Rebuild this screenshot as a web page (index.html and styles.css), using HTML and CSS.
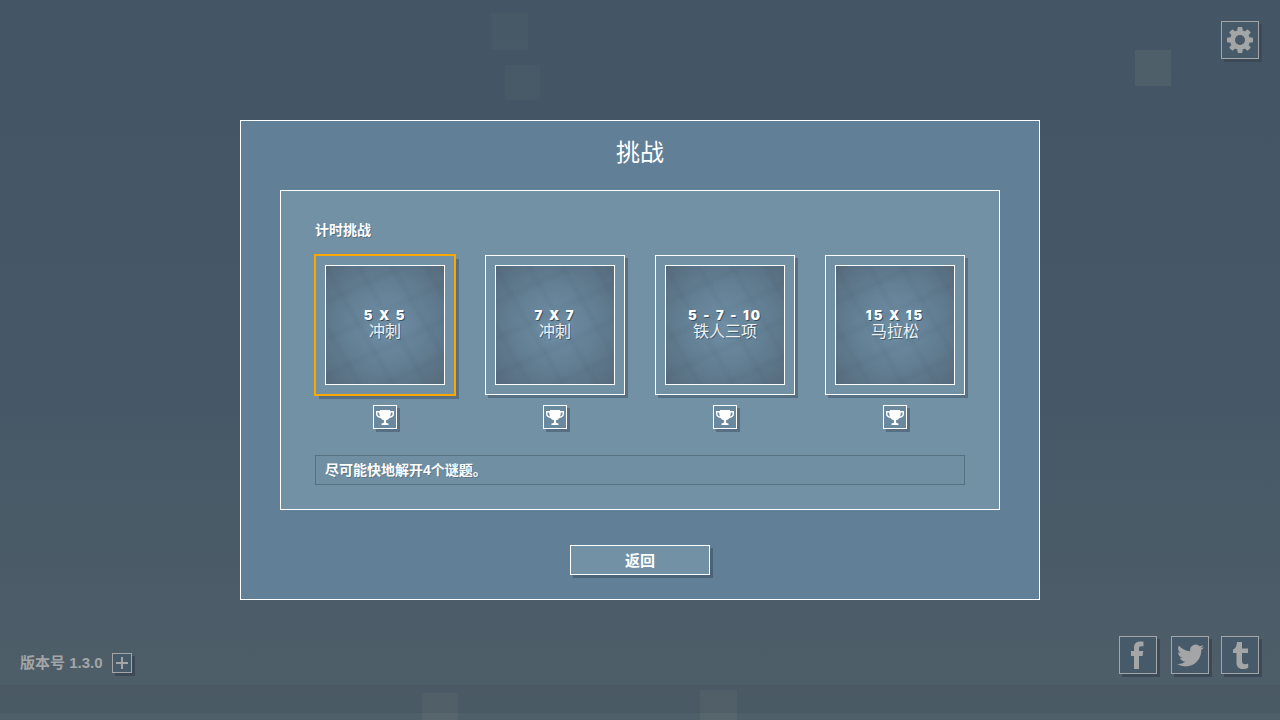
FILE: index.html
```html
<!DOCTYPE html>
<html lang="zh-CN">
<head>
    <meta charset="UTF-8">
    <meta name="viewport" content="width=device-width, initial-scale=1.0">
    <title>挑战</title>
    <link rel="stylesheet" href="styles.css">
</head>
<body>
    <div class="page">
        <div class="bg-square sq-1"></div>
        <div class="bg-square sq-2"></div>
        <div class="bg-square sq-3"></div>
        <div class="bg-square sq-4"></div>
        <div class="bg-square sq-5"></div>
        <div class="bg-band"></div>

        <header class="top-bar">
            <button class="dim-btn big" aria-label="设置">
                <svg width="30" height="30" viewBox="0 0 30 30">
                    <g fill="#a3a5a6">
                        <rect x="12.500" y="2" width="5" height="26" rx="1"/>
                        <rect x="12.500" y="2" width="5" height="26" rx="1" transform="rotate(45 15 15)"/>
                        <rect x="12.500" y="2" width="5" height="26" rx="1" transform="rotate(90 15 15)"/>
                        <rect x="12.500" y="2" width="5" height="26" rx="1" transform="rotate(135 15 15)"/>
                        <circle cx="15" cy="15" r="10"/>
                    </g>
                    <circle cx="15" cy="15" r="5" fill="#475a69"/>
                </svg>
            </button>
        </header>

        <main class="panel">
            <h1 class="panel-title">挑战</h1>
            <section class="inner">
                <h2 class="inner-title">计时挑战</h2>
                <div class="modes">
                    <div class="mode">
                        <div class="card selected">
                            <div class="thumb"><span class="size">5 X 5</span><span class="name">冲刺</span></div>
                        </div>
                        <div class="trophy"><svg width="18" height="17" viewBox="0 0 18 17"><use href="#cup"/></svg></div>
                    </div>
                    <div class="mode">
                        <div class="card">
                            <div class="thumb"><span class="size">7 X 7</span><span class="name">冲刺</span></div>
                        </div>
                        <div class="trophy"><svg width="18" height="17" viewBox="0 0 18 17"><use href="#cup"/></svg></div>
                    </div>
                    <div class="mode">
                        <div class="card">
                            <div class="thumb"><span class="size">5 - 7 - 10</span><span class="name">铁人三项</span></div>
                        </div>
                        <div class="trophy"><svg width="18" height="17" viewBox="0 0 18 17"><use href="#cup"/></svg></div>
                    </div>
                    <div class="mode">
                        <div class="card">
                            <div class="thumb"><span class="size">15 X 15</span><span class="name">马拉松</span></div>
                        </div>
                        <div class="trophy"><svg width="18" height="17" viewBox="0 0 18 17"><use href="#cup"/></svg></div>
                    </div>
                </div>
                <div class="desc">尽可能快地解开4个谜题。</div>
            </section>
            <button class="back-btn">返回</button>
        </main>

        <footer class="bottom-bar">
            <div class="version">
                <span>版本号 1.3.0</span>
                <button class="dim-btn small" aria-label="更多">
                    <svg width="14" height="14" viewBox="0 0 14 14"><path d="M6 1h2v5h5v2H8v5H6V8H1V6h5z" fill="#a3a5a6"/></svg>
                </button>
            </div>
            <div class="social">
                <button class="dim-btn big fb" aria-label="Facebook">
                    <svg width="30" height="30" viewBox="0 0 30 30"><path d="M11 29V16H8v-5h3V8c0-4.500 2.500-6.500 6-6.500 1.500 0 2.800.1 3.500.3v4.400h-2.300c-1.700 0-2.200.8-2.200 2.200V11h4.300l-.7 5H16v13z" fill="#a3a5a6"/></svg>
                </button>
                <button class="dim-btn big" aria-label="Twitter">
                    <svg width="27" height="27" viewBox="0 0 24 24"><path d="M23.953 4.57a10 10 0 01-2.825.775 4.958 4.958 0 002.163-2.723c-.951.555-2.005.959-3.127 1.184a4.92 4.92 0 00-8.384 4.482C7.69 8.095 4.067 6.13 1.64 3.162a4.822 4.822 0 00-.666 2.475c0 1.71.87 3.213 2.188 4.096a4.904 4.904 0 01-2.228-.616v.06a4.923 4.923 0 003.946 4.827 4.996 4.996 0 01-2.212.085 4.936 4.936 0 004.604 3.417 9.867 9.867 0 01-6.102 2.105c-.39 0-.779-.023-1.17-.067a13.995 13.995 0 007.557 2.209c9.053 0 13.998-7.496 13.998-13.985 0-.21 0-.42-.015-.63A9.935 9.935 0 0024 4.59z" fill="#a3a5a6"/></svg>
                </button>
                <button class="dim-btn big" aria-label="Tumblr">
                    <svg width="30" height="30" viewBox="0 0 30 30"><path d="M12 2h5v6.500h6V13h-6v8c0 2.200 1 3.200 3 3.200 1.200 0 2.300-.3 3.200-.8v4.300c-1.300.8-3 1.300-5 1.300-4.500 0-6.700-2.400-6.700-6.600V13H8V9.500c2.500-.8 3.700-3.300 4-7.500z" fill="#a3a5a6"/></svg>
                </button>
            </div>
        </footer>
    </div>

    <svg class="defs" width="0" height="0">
        <symbol id="cup" viewBox="0 0 18 17">
            <path d="M4 1h10v1h4v3c0 2-1.600 3.500-4.500 4-.9 1.200-2 1.900-3.500 2.200V13c0 .8.900 1.300 2.500 1.500V16h-7v-1.500C7.100 14.300 8 13.800 8 13v-1.800C6.500 10.900 5.400 10.200 4.500 9 1.600 8.500 0 7 0 5V2h4zM1.500 3.500V5c0 1 .8 1.900 2.400 2.400C3.400 6.200 3.200 4.900 3.100 3.500zM16.500 3.500h-1.600c-.1 1.400-.3 2.700-.8 3.900C15.700 6.900 16.500 6 16.500 5z" fill="#fff" fill-rule="evenodd"/>
        </symbol>
    </svg>
</body>
</html>
```

FILE: styles.css
```css
* { box-sizing: border-box; }
html, body { margin: 0; height: 100%; overflow: hidden; }
body { font-family: "Liberation Sans", "Noto Sans CJK SC", sans-serif; color: #fff; }
button { font-family: inherit; padding: 0; cursor: pointer; }
.defs { position: absolute; }

.page {
    position: relative;
    width: 1280px;
    height: 720px;
    display: grid;
    grid-template-rows: 120px 480px 120px;
    background: linear-gradient(180deg, #445665 0%, #465867 55%, #4f5f69 100%);
}

/* background decoration */
.bg-square { position: absolute; background: rgba(110, 125, 125, 0.08); }
.sq-1 { left: 491px; top: 13px; width: 37px; height: 37px; }
.sq-2 { left: 505px; top: 65px; width: 35px; height: 35px; }
.sq-3 { left: 1135px; top: 50px; width: 36px; height: 36px; background: rgba(110, 125, 125, 0.25); }
.sq-4 { left: 422px; top: 693px; width: 36px; height: 27px; background: rgba(120, 125, 125, 0.22); }
.sq-5 { left: 700px; top: 690px; width: 37px; height: 30px; background: rgba(120, 125, 125, 0.22); }
.bg-band { position: absolute; left: 0; right: 0; top: 685px; height: 28px; background: rgba(50, 65, 75, 0.14); }

/* top and bottom chrome */
.top-bar { position: relative; display: flex; justify-content: flex-end; padding: 21px 21px 0 0; align-items: flex-start; }
.bottom-bar { position: relative; display: flex; justify-content: space-between; align-items: flex-start; padding: 36px 21px 0 20px; }

.dim-btn {
    display: flex;
    align-items: center;
    justify-content: center;
    background: #475a69;
    border: 1px solid #a3a5a6;
    box-shadow: 3px 3px 0 #3c4a57;
}
.dim-btn.big { width: 38px; height: 38px; }
.dim-btn.small { width: 20px; height: 20px; }
.dim-btn.fb { margin-right: 2px; }

.version { display: flex; align-items: center; gap: 9px; margin-top: 17px; font-size: 15px; line-height: 18px; font-weight: bold; color: #a3a5a6; height: 20px; }
.social { display: flex; gap: 12px; }

/* main dialog */
.panel {
    position: relative;
    width: 800px;
    height: 480px;
    justify-self: center;
    display: flex;
    flex-direction: column;
    align-items: center;
    background: #618097;
    border: 1px solid #fff;
}
.panel-title { margin: 0; height: 69px; padding-top: 14px; font-size: 24px; line-height: 36px; font-weight: normal; }

.inner {
    width: 720px;
    height: 320px;
    padding: 30px 34px 0;
    background: #7391a5;
    border: 1px solid #fff;
}
.inner-title { margin: 0 0 15px; font-size: 14px; line-height: 19px; font-weight: bold; text-shadow: 1px 1px 0 rgba(60, 80, 95, 0.5); }

.modes { display: flex; gap: 30px; }
.mode { width: 140px; display: flex; flex-direction: column; align-items: center; }

.card {
    width: 140px;
    height: 140px;
    padding: 9px;
    border: 1px solid #fff;
    box-shadow: 3px 3px 0 #566f82;
}
.card.selected { border: 1px solid #fca800; outline: 1px solid #fca800; box-shadow: 4px 4px 0 #566f82; }

.thumb {
    width: 120px;
    height: 120px;
    display: flex;
    flex-direction: column;
    align-items: center;
    justify-content: center;
    padding-bottom: 4px;
    border: 1px solid #fff;
    background:
        repeating-linear-gradient(60deg, rgba(50, 70, 85, 0.06) 0, rgba(50, 70, 85, 0) 5px, rgba(50, 70, 85, 0) 24px, rgba(50, 70, 85, 0.06) 29px),
        repeating-linear-gradient(155deg, rgba(50, 70, 85, 0.06) 0, rgba(50, 70, 85, 0) 6px, rgba(50, 70, 85, 0) 27px, rgba(50, 70, 85, 0.06) 33px),
        radial-gradient(circle at 50% 50%, #6f8ea4 0%, #637f94 50%, #566b7c 100%);
}
.size { font-family: "Inter", sans-serif; font-size: 13px; line-height: 15px; font-weight: 900; letter-spacing: 2px; text-shadow: 1px 1px 0 rgba(40, 55, 70, 0.7); }
.name { margin-top: -2px; font-family: "Noto Sans CJK SC", sans-serif; font-size: 16px; line-height: 18px; color: #eef2f4; text-shadow: 1px 1px 0 rgba(40, 55, 70, 0.5); }

.trophy {
    width: 24px;
    height: 24px;
    margin-top: 10px;
    display: flex;
    align-items: center;
    justify-content: center;
    border: 1px solid #fff;
    background: #6b899e;
    box-shadow: 3px 3px 0 #566f82;
}

.desc {
    height: 30px;
    margin-top: 26px;
    padding-left: 9px;
    border: 1px solid #56707f;
    background: #718fa3;
    font-size: 14px;
    line-height: 28px;
    font-weight: bold;
    text-shadow: 1px 1px 0 rgba(60, 80, 95, 0.4);
}

.back-btn {
    width: 140px;
    height: 30px;
    margin-top: 35px;
    padding-bottom: 2px;
    background: #7391a5;
    border: 1px solid #fff;
    box-shadow: 3px 3px 0 #4a6376;
    color: #fff;
    font-size: 15px;
    font-weight: bold;
}
```
